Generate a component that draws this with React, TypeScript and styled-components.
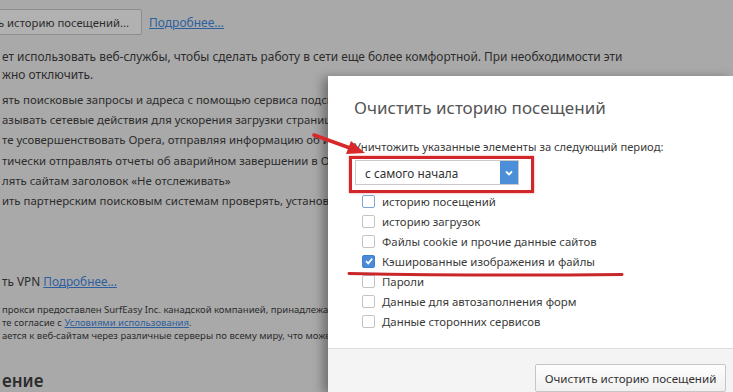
import React from 'react';
import styled, { createGlobalStyle } from 'styled-components';

const GlobalStyle = createGlobalStyle`
    html, body {
        margin: 0;
        padding: 0;
        background: #a9a9a9;
    }
    body {
        font-family: "Noto Sans", "Open Sans", sans-serif;
    }
`;

const Page = styled.div`
    position: relative;
    width: 733px;
    height: 392px;
    overflow: hidden;
    background: #a9a9a9;
    color: #2c2c2c;
`;

const Settings = styled.div`
    padding-left: 2px;
    font-size: 12px;
    white-space: nowrap;
`;

const TopRow = styled.div`
    display: flex;
    align-items: center;
    gap: 7px;
    margin-top: 9px;
    height: 26px;
`;

const OldButton = styled.div`
    height: 24px;
    margin-left: -12px;
    padding: 0 12px 0 7px;
    display: flex;
    align-items: center;
    background: #b1b1b1;
    border: 1px solid #8e8e8e;
    border-radius: 2px;
    font-size: 11.3px;
`;

const Link = styled.span`
    color: #2d5f9f;
    text-decoration: underline;
`;

const Para = styled.div<{ $top: number; $lh: number; $size?: number }>`
    margin-top: ${(p) => p.$top}px;
    line-height: ${(p) => p.$lh}px;
    font-size: ${(p) => p.$size ?? 12}px;
`;

const Heading = styled.div`
    margin-top: 28px;
    font-size: 17px;
    font-weight: 600;
    line-height: 22px;
`;

const Dialog = styled.div`
    position: absolute;
    left: 328px;
    top: 76px;
    right: 0;
    bottom: 0;
    background: #fff;
    box-shadow: -5px 2px 10px rgba(0, 0, 0, 0.35);
    display: flex;
    flex-direction: column;
    color: #333;
`;

const Body = styled.div`
    height: 273px;
    box-sizing: border-box;
    padding: 20px 0 0 26px;
    border-bottom: 1px solid #dcdcdc;
`;

const Title = styled.div`
    font-size: 17px;
    line-height: 24px;
    color: #555;
`;

const Label = styled.div`
    margin-top: 20px;
    font-size: 11.2px;
    line-height: 14px;
    color: #3a3a3a;
`;

const RedFrame = styled.div`
    margin: 2px 0 0 -5px;
    width: 185px;
    height: 37px;
    box-sizing: border-box;
    border: 3px solid #d3262a;
    box-shadow: 0 0 2px rgba(200, 30, 30, 0.5);
    padding: 1px 12px 5px 3px;
`;

const Select = styled.div`
    display: flex;
    height: 25px;
    box-sizing: border-box;
    border: 1px solid #c9c9c9;
    background: #fff;
`;

const SelectText = styled.div`
    flex: 1;
    padding-left: 9px;
    display: flex;
    align-items: center;
    font-size: 11.8px;
    color: #333;
`;

const DropButton = styled.div`
    width: 18px;
    background: #4a8fd8;
    display: flex;
    align-items: center;
    justify-content: center;
`;

const CheckList = styled.div`
    margin-top: -2px;
    padding-left: 8px;
`;

const CheckRow = styled.div`
    display: flex;
    align-items: center;
    gap: 7px;
    height: 20px;
    font-size: 11.4px;
    color: #3a3a3a;
`;

const Box = styled.div<{ $checked?: boolean; $focus?: boolean }>`
    width: 13px;
    height: 13px;
    box-sizing: border-box;
    border-radius: 2px;
    border: 1px solid ${(p) => (p.$checked ? '#3f7fcf' : p.$focus ? '#7ea4d6' : '#c4c4c4')};
    background: ${(p) => (p.$checked ? '#4a8ad6' : '#fff')};
    display: flex;
    align-items: center;
    justify-content: center;
`;

const Footer = styled.div`
    flex: 1;
    background: #f4f4f4;
    display: flex;
    justify-content: flex-end;
    align-items: flex-start;
    padding: 15px 7px 0 0;
`;

const ClearButton = styled.div`
    width: 191px;
    height: 28px;
    box-sizing: border-box;
    border: 1px solid #c6c6c6;
    border-radius: 2px;
    background: linear-gradient(#fdfdfd, #f0f0f0);
    display: flex;
    align-items: center;
    justify-content: center;
    font-size: 11.6px;
    color: #333;
`;

const Annotations = styled.svg`
    position: absolute;
    left: 0;
    top: 0;
    pointer-events: none;
`;

const items = [
    { label: 'историю посещений', focus: true },
    { label: 'историю загрузок' },
    { label: 'Файлы cookie и прочие данные сайтов' },
    { label: 'Кэшированные изображения и файлы', checked: true },
    { label: 'Пароли' },
    { label: 'Данные для автозаполнения форм' },
    { label: 'Данные сторонних сервисов' },
];

const options = [
    'ять поисковые запросы и адреса с помощью сервиса подсказок',
    'азывать сетевые действия для ускорения загрузки страниц',
    'те усовершенствовать Opera, отправляя информацию об использовании',
    'тически отправлять отчеты об аварийном завершении в Opera',
    'лять сайтам заголовок «Не отслеживать»',
    'ить партнерским поисковым системам проверять, установлена ли',
];

export default function App() {
    return (
        <>
            <GlobalStyle />
            <Page>
                <Settings>
                    <TopRow>
                        <OldButton>ь историю посещений...</OldButton>
                        <Link>Подробнее...</Link>
                    </TopRow>
                    <Para $top={12} $lh={18} $size={11.9}>
                        ет использовать веб-службы, чтобы сделать работу в сети еще более комфортной. При необходимости эти
                        <br />
                        жно отключить.
                    </Para>
                    <Para $top={7} $lh={20.2} $size={11.4}>
                        {options.map((o) => (
                            <div key={o}>{o}</div>
                        ))}
                    </Para>
                    <Para $top={60} $lh={20} $size={11.8}>
                        ть VPN <Link>Подробнее...</Link>
                    </Para>
                    <Para $top={12} $lh={13} $size={9.5}>
                        <div>прокси предоставлен SurfEasy Inc. канадской компанией, принадлежащей Opera</div>
                        <div>
                            те согласие с <Link>Условиями использования</Link>.
                        </div>
                        <div>ается к веб-сайтам через различные серверы по всему миру, что может</div>
                    </Para>
                    <Heading>ение</Heading>
                </Settings>

                <Dialog>
                    <Body>
                        <Title>Очистить историю посещений</Title>
                        <Label>Уничтожить указанные элементы за следующий период:</Label>
                        <RedFrame>
                            <Select>
                                <SelectText>с самого начала</SelectText>
                                <DropButton>
                                    <svg width="10" height="8" viewBox="0 0 10 8">
                                        <path d="M2 2.5 L5 5.5 L8 2.5" stroke="#fff" strokeWidth="1.8" fill="none" />
                                    </svg>
                                </DropButton>
                            </Select>
                        </RedFrame>
                        <CheckList>
                            {items.map((it) => (
                                <CheckRow key={it.label}>
                                    <Box $checked={it.checked} $focus={it.focus}>
                                        {it.checked && (
                                            <svg width="10" height="10" viewBox="0 0 10 10">
                                                <path d="M2 5.2 L4.2 7.4 L8.2 2.6" stroke="#fff" strokeWidth="1.7" fill="none" />
                                            </svg>
                                        )}
                                    </Box>
                                    {it.label}
                                </CheckRow>
                            ))}
                        </CheckList>
                    </Body>
                    <Footer>
                        <ClearButton>Очистить историю посещений</ClearButton>
                    </Footer>
                </Dialog>

                <Annotations width="733" height="392" viewBox="0 0 733 392">
                    <line x1="314" y1="135" x2="350" y2="148" stroke="#d8282b" strokeWidth="3.5" strokeLinecap="round" />
                    <polygon points="365,153 346,154 351,141" fill="#d8282b" />
                    <path d="M349 273.5 Q 480 276 622 274.5" stroke="#c9262a" strokeWidth="3" fill="none" strokeLinecap="round" />
                </Annotations>
            </Page>
        </>
    );
}
